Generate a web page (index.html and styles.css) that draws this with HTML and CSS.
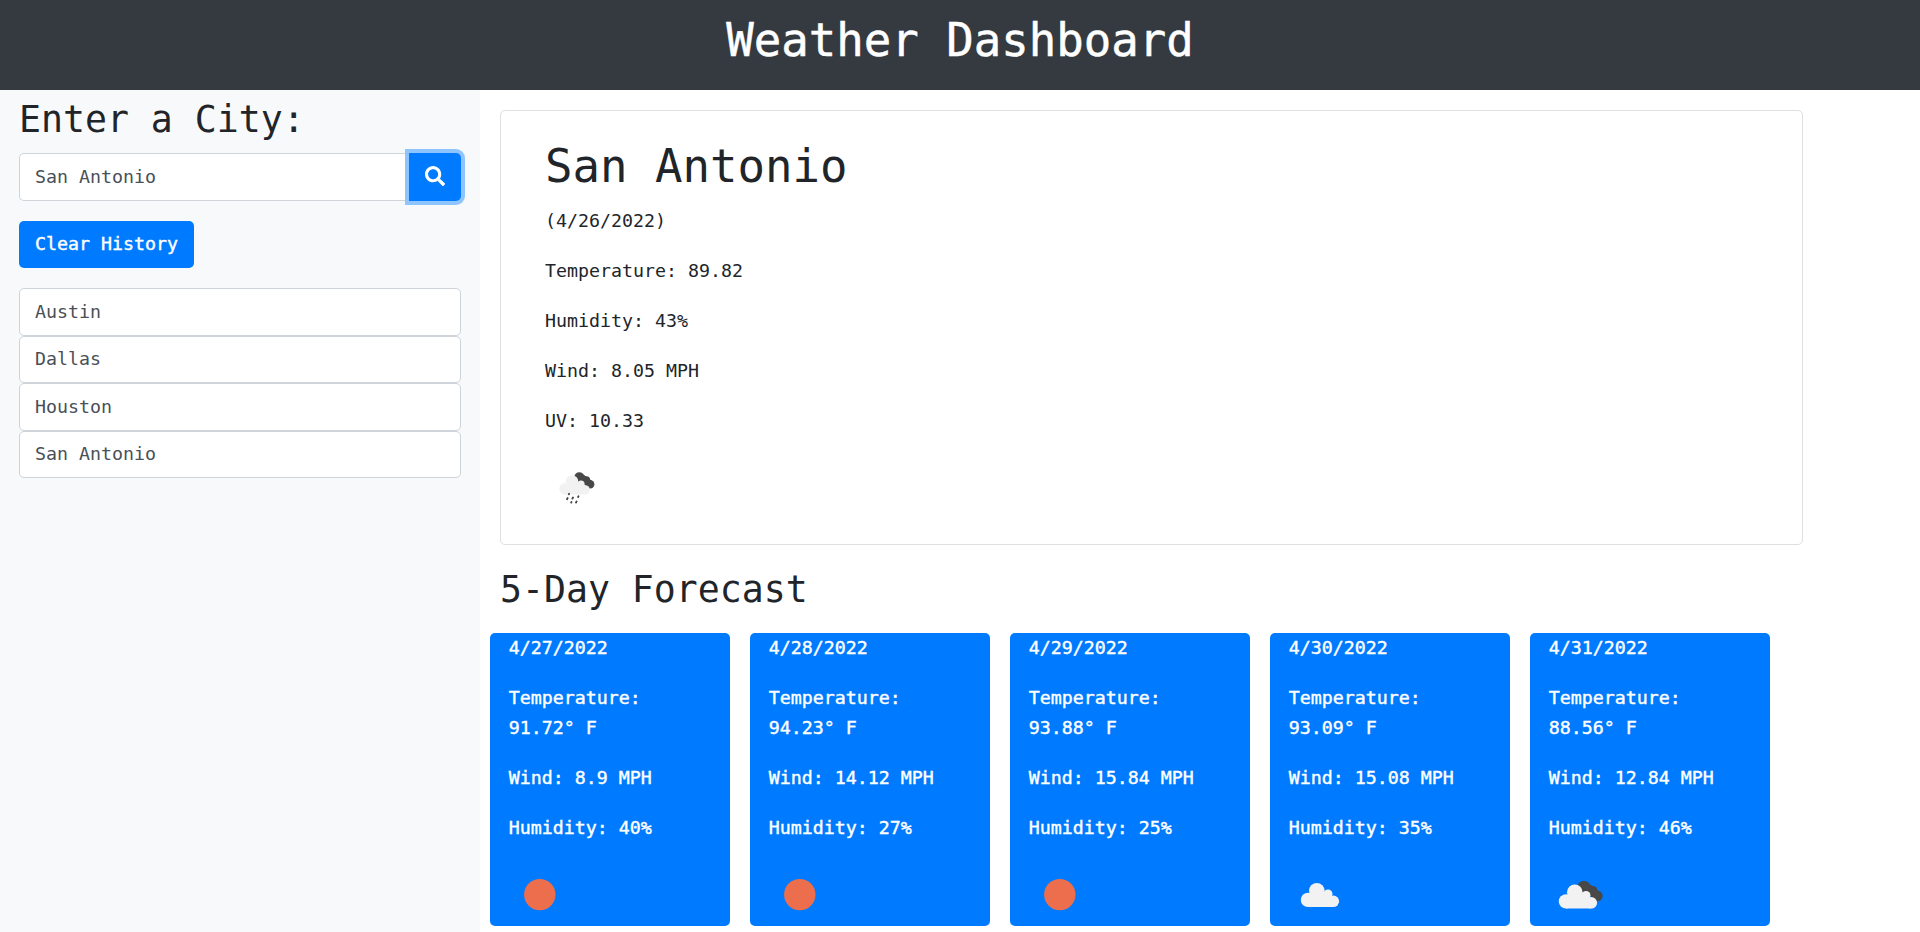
FILE: index.html
```html
<!DOCTYPE html>
<html lang="en">
<head>
<meta charset="utf-8">
<title>Weather Dashboard</title>
<link rel="stylesheet" href="styles.css">
</head>
<body>
<svg class="defs" aria-hidden="true">
  <symbol id="sun" viewBox="0 0 62.5 62.5"><circle cx="30.8" cy="31.6" r="15.7" fill="#ec6e4c"/></symbol>
  <symbol id="cloud" viewBox="0 0 62.5 62.5">
    <g fill="#f2f2f2">
      <circle cx="19" cy="36.9" r="7.200"/>
      <circle cx="27.800" cy="27.800" r="7.800"/>
      <circle cx="39" cy="31" r="4.500"/>
      <circle cx="44.300" cy="38.300" r="5.800"/>
      <path d="M19 44.100V34l3-6h11l7 3 3 4 1.300 9.100z"/>
    </g>
  </symbol>
  <symbol id="clouds" viewBox="0 0 62.5 62.5">
    <g fill="#484848">
      <circle cx="34.800" cy="24" r="6.300"/>
      <circle cx="43.800" cy="27.500" r="4.600"/>
      <circle cx="48.400" cy="32.900" r="5.300"/>
      <path d="M30 24l8-5 8 6 5 4-4 9z"/>
    </g>
    <use href="#cloud" width="62.5" height="62.5" x="-2" y="1.500"/>
  </symbol>
  <symbol id="rain" viewBox="0 0 62.5 62.5">
    <use href="#clouds" width="50" height="50" x="6.400" y="2"/>
    <path stroke="#484848" stroke-width="1.900" stroke-linecap="round" d="M23.800 38.200l.3-.5M22 43.200l.6-1.100M27.400 42.600l.6-1.100M33.100 41l.4-.7M26.200 46.600l.3-.5M31 46.500l.6-1"/>
  </symbol>
</svg>
<header class="header"><h1>Weather Dashboard</h1></header>
<div class="layout">
  <aside class="sidebar">
    <h2>Enter a City:</h2>
    <div class="search">
      <input class="field" type="text" value="San Antonio" aria-label="City">
      <button class="search-btn" aria-label="Search">
        <svg viewBox="0 0 512 512"><path fill="currentColor" d="M505 442.700L405.300 343c-4.500-4.500-10.600-7-17-7H372c27.600-35.300 44-79.700 44-128C416 93.100 322.900 0 208 0S0 93.100 0 208s93.100 208 208 208c48.300 0 92.700-16.400 128-44v16.300c0 6.400 2.500 12.500 7 17l99.700 99.700c9.400 9.400 24.600 9.400 33.900 0l28.300-28.300c9.400-9.400 9.400-24.600.1-34zM208 336c-70.700 0-128-57.200-128-128 0-70.700 57.200-128 128-128 70.700 0 128 57.200 128 128 0 70.700-57.200 128-128 128z"/></svg>
      </button>
    </div>
    <button class="clear-btn">Clear History</button>
    <div class="history">
      <div class="field">Austin</div>
      <div class="field">Dallas</div>
      <div class="field">Houston</div>
      <div class="field">San Antonio</div>
    </div>
  </aside>
  <main class="main">
    <section class="today">
      <h1>San Antonio</h1>
      <p>(4/26/2022)</p>
      <p>Temperature: 89.82</p>
      <p>Humidity: 43%</p>
      <p>Wind: 8.05 MPH</p>
      <p>UV: 10.33</p>
      <svg class="weather"><use href="#rain"/></svg>
    </section>
    <h2 class="forecast-title">5-Day Forecast</h2>
    <section class="forecast">
      <article class="day"><p>4/27/2022</p><p>Temperature: 91.72° F</p><p>Wind: 8.9 MPH</p><p>Humidity: 40%</p><svg class="weather"><use href="#sun"/></svg></article>
      <article class="day"><p>4/28/2022</p><p>Temperature: 94.23° F</p><p>Wind: 14.12 MPH</p><p>Humidity: 27%</p><svg class="weather"><use href="#sun"/></svg></article>
      <article class="day"><p>4/29/2022</p><p>Temperature: 93.88° F</p><p>Wind: 15.84 MPH</p><p>Humidity: 25%</p><svg class="weather"><use href="#sun"/></svg></article>
      <article class="day"><p>4/30/2022</p><p>Temperature: 93.09° F</p><p>Wind: 15.08 MPH</p><p>Humidity: 35%</p><svg class="weather"><use href="#cloud"/></svg></article>
      <article class="day"><p>4/31/2022</p><p>Temperature: 88.56° F</p><p>Wind: 12.84 MPH</p><p>Humidity: 46%</p><svg class="weather"><use href="#clouds"/></svg></article>
    </section>
  </main>
</div>
</body>
</html>
```

FILE: styles.css
```css
* { box-sizing: border-box; }

body {
  margin: 0;
  height: 932px;
  overflow: hidden;
  display: flex;
  flex-direction: column;
  background: #fff;
  color: #212529;
  font-family: Consolas, "DejaVu Sans Mono", monospace;
  font-size: 18.27px;
  line-height: 30px;
}

h1, h2, p { margin: 0; font-weight: 400; }
h1 { font-size: 45.68px; line-height: 60px; }
h2 { font-size: 36.5px; line-height: 48px; }
p { margin-bottom: 20px; }

.defs { display: none; }

.header {
  flex: none;
  height: 90px;
  padding-top: 11px;
  background: #343a40;
  color: #fff;
  text-align: center;
}
.header h1 { -webkit-text-stroke: 0.5px #fff; }

.layout { flex: 1; display: flex; min-height: 0; }

.sidebar {
  flex: none;
  width: 480px;
  padding: 6px 19px 0;
  background: #f8f9fa;
}

.search { display: flex; margin: 9px 0 20px; }

.field {
  display: block;
  width: 100%;
  height: 47.5px;
  padding: 7.75px 15px;
  border: 1px solid #ced4da;
  border-radius: 5px;
  background: #fff;
  color: #495057;
  font: inherit;
}
.search .field {
  flex: 1;
  min-width: 0;
  border-right: 0;
  border-radius: 5px 0 0 5px;
}

.search-btn {
  flex: none;
  width: 52px;
  height: 47.5px;
  padding: 0 0 2px;
  display: grid;
  place-items: center;
  border: 0;
  border-radius: 0 5px 5px 0;
  background: #007bff;
  color: #fff;
  box-shadow: 0 0 0 4px #8fc5fe;
}
.search-btn svg { width: 20px; height: 20px; }

.clear-btn {
  display: block;
  width: 175px;
  height: 47px;
  padding: 0 0 1px;
  border: 0;
  border-radius: 5px;
  background: #007bff;
  color: #fff;
  font: inherit;
  -webkit-text-stroke: 0.4px #fff;
}

.history { margin-top: 20.6px; }

.main { flex: 1; min-width: 0; padding: 20px 0 0 20px; }

.today {
  width: 1303px;
  height: 435px;
  padding: 26px 44px;
  border: 1px solid #dfdfdf;
  border-radius: 5px;
}
.today h1 { margin-bottom: 9px; }

.weather { display: block; width: 62.5px; height: 62.5px; }

.forecast-title { margin: 21px 0 19px; }

.forecast { display: flex; gap: 20px; margin-left: -10px; }

.day {
  width: 240px;
  height: 292.5px;
  padding: 0 18.75px;
  border-radius: 5px;
  background: #007bff;
  color: #fff;
  -webkit-text-stroke: 0.4px #fff;
}
.day .weather { -webkit-text-stroke: 0; }
```
